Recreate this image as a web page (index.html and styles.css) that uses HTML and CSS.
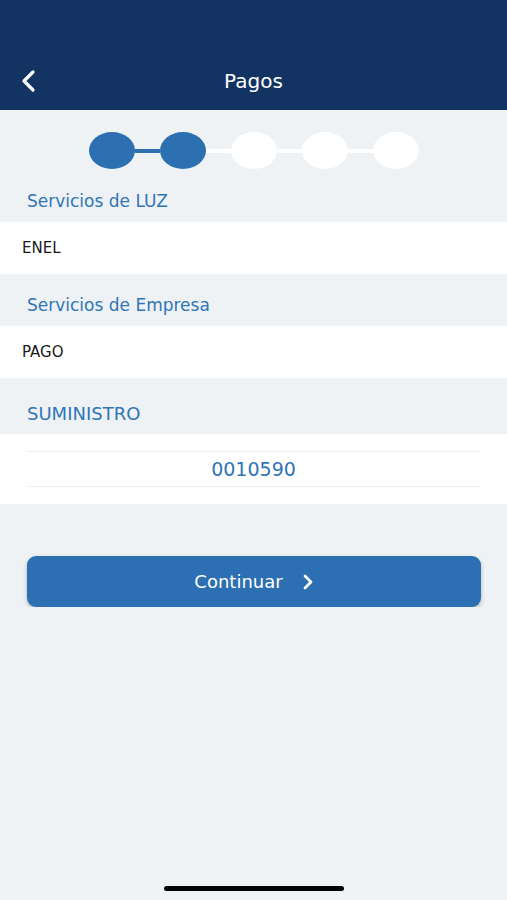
FILE: index.html
```html
<!DOCTYPE html>
<html lang="es">
<head>
  <meta charset="UTF-8">
  <title>Pagos</title>
  <link rel="stylesheet" href="styles.css">
</head>
<body>
  <header class="top">
    <div class="bar">
      <a class="back" href="#">
        <svg width="16" height="24" viewBox="0 0 16 24"><path d="M13 3 L4 12 L13 21" fill="none" stroke="#fff" stroke-width="3.2" stroke-linecap="round" stroke-linejoin="round"/></svg>
      </a>
      <h1>Pagos</h1>
    </div>
  </header>

  <div class="steps">
    <span class="dot on"></span><span class="link on"></span>
    <span class="dot on"></span><span class="link"></span>
    <span class="dot"></span><span class="link"></span>
    <span class="dot"></span><span class="link"></span>
    <span class="dot"></span>
  </div>

  <div class="label">Servicios de LUZ</div>
  <div class="row">ENEL</div>

  <div class="label">Servicios de Empresa</div>
  <div class="row">PAGO</div>

  <div class="label caps">SUMINISTRO</div>
  <div class="block">
    <div class="field">0010590</div>
  </div>

  <button class="btn" type="button">
    <span>Continuar</span>
    <svg width="12" height="16" viewBox="0 0 12 16"><path d="M3 2 L9 8 L3 14" fill="none" stroke="#fff" stroke-width="2.8" stroke-linecap="round" stroke-linejoin="round"/></svg>
  </button>

  <div class="home"></div>
</body>
</html>
```

FILE: styles.css
```css
body { margin: 0; background-color: #eef2f5; font-family: "DejaVu Sans", sans-serif; }

.top { background-color: #133462; height: 110px; box-sizing: border-box; padding-top: 56px; }
.bar { height: 50px; display: flex; align-items: center; justify-content: center; position: relative; }
.bar h1 { margin: 0; color: #fff; font-size: 20px; font-weight: normal; }
.back { position: absolute; left: 20px; top: 13px; display: block; height: 24px; }

.steps { display: flex; align-items: center; justify-content: center; padding-top: 21px; height: 39px; }
.dot { width: 46px; height: 37px; border-radius: 50%; background-color: #fff; }
.link { width: 25px; height: 4px; background-color: #fff; }
.dot.on, .link.on { background-color: #2d70b2; }

.label { padding: 21px 27px 11px; line-height: 20px; font-size: 17px; color: #2f75b7; }
.label.caps { padding: 26px 27px 10px; font-size: 18px; }

.row { background-color: #fff; height: 52px; line-height: 52px; padding-left: 22px; font-size: 15px; color: #1a1a1a; }

.block { background-color: #fff; padding: 17px 27px; }
.field { border-top: 1px solid #eceff2; border-bottom: 1px solid #eceff2; height: 34px; line-height: 34px; text-align: center; font-size: 19px; color: #2f75b7; }

.btn { display: flex; align-items: center; justify-content: center; gap: 19px; margin: 52px 26px 0 27px; width: 454px; height: 51px; border: none; border-radius: 9px; background-color: #2c6fb2; color: #fff; font-family: "DejaVu Sans", sans-serif; font-size: 18px; box-shadow: 0 2px 4px rgba(0,0,0,0.25); cursor: pointer; }
.btn svg { margin-top: 1px; }

.home { position: fixed; left: 164px; bottom: 9px; width: 180px; height: 5px; border-radius: 3px; background-color: #000; }
```
